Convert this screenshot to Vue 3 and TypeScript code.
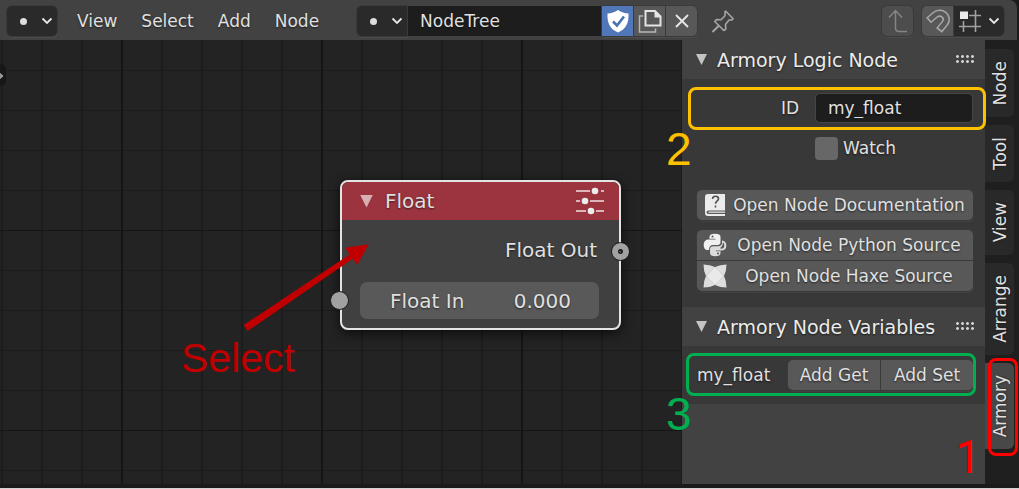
<script setup lang="ts">
import { ref } from 'vue'

const menus = ['View', 'Select', 'Add', 'Node']
const tabs = ['Node', 'Tool', 'View', 'Arrange', 'Armory']
const activeTab = ref('Armory')
const treeName = ref('NodeTree')
const nodeId = ref('my_float')
const watched = ref(false)
const floatIn = ref('0.000')
</script>

<template>
  <div class="editor">
    <header class="bar">
      <button class="btn dark picker" aria-label="Editor type">
        <i class="dot"></i>
        <svg class="chev" viewBox="0 0 12 8"><path d="M1.5 1.5 6 6l4.500-4.500" /></svg>
      </button>
      <nav class="menus">
        <button v-for="m in menus" :key="m" class="menu">{{ m }}</button>
      </nav>
      <div class="group tree">
        <button class="btn dark picker" aria-label="Browse node trees">
          <i class="dot"></i>
          <svg class="chev" viewBox="0 0 12 8"><path d="M1.5 1.5 6 6l4.500-4.500" /></svg>
        </button>
        <input v-model="treeName" class="tree-name" aria-label="Node tree name" />
        <button class="btn square blue" aria-label="Fake user">
          <svg viewBox="0 0 30 30">
            <path d="M15 4c3 2.500 7 3.200 10.500 3.500C26 17 23 23 15 26.500 7 23 4 17 4.500 7.500 8 7.200 12 6.500 15 4z" fill="#fff" />
            <path d="m10 15.500 4 4 7-9" fill="none" stroke="#4772b3" stroke-width="2.600" />
          </svg>
        </button>
        <button class="btn square" aria-label="Duplicate">
          <svg viewBox="0 0 30 30" fill="none" stroke="#e4e4e4" stroke-width="1.500">
            <path d="M10.500 5H20l5.500 5.500v9h-15z" stroke-width="2" />
            <path d="M19.500 4.500v7h7z" fill="#e4e4e4" stroke="none" />
            <path d="M8 10H4.500v16h16v-3.500" stroke="#b5b5b5" />
          </svg>
        </button>
        <button class="btn square" aria-label="Unlink">
          <svg viewBox="0 0 30 30"><path d="m9 9 12 12M21 9 9 21" stroke="#e8e8e8" stroke-width="1.800" /></svg>
        </button>
      </div>
      <button class="bare" aria-label="Pin">
        <svg viewBox="0 0 24 24" fill="none" stroke="#a6a6a6" stroke-width="1.600" stroke-linejoin="round">
          <path d="m14.500 2 7.500 7.500-1 1.500h-3l-3.500 4.500.3 4.500-2 1.500-9-9L5.500 10.500l4.500.3 4-4V3z" />
          <path d="M8 16.500 1.500 23" stroke-width="2" />
        </svg>
      </button>
      <button class="btn faded up" aria-label="Go to parent node tree">
        <svg viewBox="0 0 30 30" fill="none" stroke="#858585" stroke-width="1.500">
          <path d="M12.500 4.500V22q0 3.500 3.500 3.500h8M6 11.500l6.500-7 6.500 7" />
        </svg>
      </button>
      <div class="group snap">
        <button class="btn square" aria-label="Snap">
          <svg viewBox="0 0 30 30" fill="none">
            <path d="M5.500 14.500 12 9C18 4 26.500 10.500 22 17l-6 7.500" stroke="#a8a8a8" stroke-width="7.500" />
            <path d="M6.700 13.500 12 9C18 4 26.500 10.500 22 17l-5 6.200" stroke="#595959" stroke-width="4.500" />
          </svg>
        </button>
        <button class="btn dark snap-to" aria-label="Snap element">
          <svg class="grid-icon" viewBox="0 0 24 24" fill="none" stroke="#a0a0a0" stroke-width="1.600">
            <path d="M17.500 1v22M5.500 12v11M11 6.500h12M1 17.500h22" />
            <path d="M2 2.500h8v7.500H2z" fill="#ececec" stroke="none" />
          </svg>
          <svg class="chev" viewBox="0 0 12 8"><path d="M1.5 1.5 6 6l4.500-4.500" /></svg>
        </button>
      </div>
    </header>

    <div class="work">
      <main class="canvas">
        <button class="expander" aria-label="Show toolbar"></button>
        <section class="node">
          <header class="node-head">
            <i class="tri"></i>
            <span>Float</span>
            <svg class="sliders" viewBox="0 0 30 28" fill="none" stroke="#dcb4b8" stroke-width="1.800">
              <path d="M1 4h14M26 4h3M1 14h4M15 14h14M1 24h10M21 24h8" />
              <g fill="#ececec" stroke="none">
                <circle cx="20" cy="4" r="3.300" /><circle cx="10" cy="14" r="3.300" /><circle cx="16" cy="24" r="3.300" />
              </g>
            </svg>
          </header>
          <div class="output">Float Out<i class="socket out"></i></div>
          <div class="input-row">
            <i class="socket in"></i>
            <label class="number">
              <span>Float In</span>
              <input v-model="floatIn" inputmode="decimal" />
            </label>
          </div>
        </section>
        <svg class="arrow" viewBox="0 0 126 88" fill="#c00000">
          <path d="M.7 81 106.500 10.500 102 3.700 125.700.3 114.300 20.700 109.800 14.800 4.700 87z" />
        </svg>
        <span class="note select-note">Select</span>
      </main>

      <aside class="sidebar">
        <h2 class="panel-head"><i class="tri"></i>Armory Logic Node<i class="grip"></i></h2>
        <div class="panel props">
          <div class="id-row">
            <label for="node-id">ID</label>
            <input id="node-id" v-model="nodeId" />
            <i class="frame yellow"></i>
            <span class="note two">2</span>
          </div>
          <label class="watch"><input v-model="watched" type="checkbox" />Watch</label>
          <button class="btn wide doc">
            <svg viewBox="0 0 24 24">
              <path d="M5 1h17v16.500H5.500q-2 0-2 1.700t2 1.700H22V23H5q-3 0-3-3V4q0-3 3-3z" fill="#ececec" />
              <path d="M5.500 19.200H22" stroke="#d8d8d8" stroke-width="1.400" />
              <path d="M9.500 5.800q.4-2.600 3-2.600 3 0 3 2.500c0 2.400-3 2.400-3 5M12.500 12.500v1.900" fill="none" stroke="#505050" stroke-width="1.600" />
            </svg>
            <span>Open Node Documentation</span>
          </button>
          <div class="stack">
            <button class="btn wide">
              <svg viewBox="0 0 24 24">
                <path d="M19 7.500q4.300.5 4.300 5t-4.300 5h-6v.8h4.500V20q0 3.200-5.200 3.200T7 20v-3.500q0-3.200 3.500-3.200h4.500Q19 13.300 19 9.500z" fill="#dcdcdc" />
                <path d="M17.500 15.800q3.800.2 3.800-3.300 0-2.500-1.300-3.200-.3 4.500-2.500 5.200z" fill="#585858" />
                <path d="M6.500 6.500V4Q6.500.8 12 .8T17.500 4v5q0 3-3 3H10q-3.800 0-4 5H4.500Q.7 17 .7 12t4.300-5.500h7.500v-.7H6.500z" fill="#f0f0f0" />
                <circle cx="9.500" cy="3.600" r="1" fill="#555" /><circle cx="15" cy="20.600" r="1" fill="#555" />
              </svg>
              <span>Open Node Python Source</span>
            </button>
            <button class="btn wide">
              <svg viewBox="0 0 24 24">
                <path d="M.5.5Q7 .5 12 3 17 .5 23.500.5q0 6.500-2.500 11.500 2.500 5 2.500 11.500-6.500 0-11.500-2.500-5 2.500-11.500 2.500Q.5 17 3 12 .5 7 .5.5z" fill="#dedede" />
                <path d="M12 3 21 12 12 21 3 12z" fill="#e9e9e9" stroke="#c8c8c8" stroke-width=".7" />
              </svg>
              <span>Open Node Haxe Source</span>
            </button>
          </div>
        </div>
        <h2 class="panel-head"><i class="tri"></i>Armory Node Variables<i class="grip"></i></h2>
        <div class="panel vars">
          <span class="var-name">my_float</span>
          <div class="group pair">
            <button class="btn">Add Get</button>
            <button class="btn">Add Set</button>
          </div>
          <i class="frame green"></i>
          <span class="note three">3</span>
        </div>
        <span class="note one">1</span>
      </aside>

      <nav class="tabs">
        <button v-for="t in tabs" :key="t" class="tab" :class="{ active: t === activeTab }" @click="activeTab = t">
          <span>{{ t }}</span>
          <i v-if="t === 'Armory'" class="frame red"></i>
        </button>
      </nav>
    </div>
  </div>
</template>

<style>
body {
  margin: 0;
  background: #1b1b1b;
}
</style>

<style scoped>
* {
  box-sizing: border-box;
}
.editor {
  display: flex;
  flex-direction: column;
  min-height: 100vh;
  overflow: hidden;
  background: #1b1b1b;
  border-bottom: 1px solid #d4d4d4;
  color: #e0e0e0;
  font: 17px/20px "DejaVu Sans", sans-serif;
  text-shadow: 0 1px 2px rgba(0, 0, 0, 0.6);
}
button,
input {
  margin: 0;
  padding: 0;
  border: 0;
  background: none;
  color: inherit;
  font: inherit;
  text-shadow: inherit;
}
input {
  min-width: 0;
  outline: 0;
}
svg {
  display: block;
  flex: none;
}
.bar {
  display: flex;
  align-items: center;
  height: 40px;
  margin-right: 2px;
  padding: 2px 13px 0 7px;
  background: #424242;
  border-radius: 0 8px 0 0;
}
.btn {
  display: flex;
  align-items: center;
  justify-content: center;
  height: 30px;
  background: #585858;
  border-radius: 5px;
  box-shadow: 0 0 0 1px #3a3a3a, 1px 2px 1px rgba(255, 255, 255, 0.06);
}
.btn.dark {
  background: #2a2a2a;
}
.btn.blue {
  background: #5078b8;
}
.btn.faded {
  background: #4d4d4d;
}
.picker {
  gap: 14px;
  width: 50px;
  padding-left: 8px;
}
.dot {
  width: 7px;
  height: 7px;
  border-radius: 50%;
  background: #dedede;
}
.chev {
  width: 12px;
  height: 8px;
  fill: none;
  stroke: #e6e6e6;
  stroke-width: 1.8;
}
.menus {
  display: flex;
  margin: 0 26px 0 8px;
}
.menu {
  padding: 0 12px;
  height: 30px;
}
.group {
  display: flex;
  gap: 1px;
}
.group > * {
  border-radius: 0;
}
.group > :first-child {
  border-radius: 5px 0 0 5px;
}
.group > :last-child {
  border-radius: 0 5px 5px 0;
}
.square {
  width: 31px;
}
.square svg,
.up svg {
  width: 30px;
  height: 30px;
}
.tree-name {
  width: 193px;
  height: 30px;
  padding: 0 12px;
  background: #1d1d1d;
}
.bare {
  margin-left: 14px;
}
.bare svg {
  width: 24px;
  height: 24px;
}
.up {
  width: 31px;
  margin-left: auto;
}
.snap {
  margin-left: 9px;
}
.snap-to {
  gap: 6px;
  width: 50px;
}
.grid-icon {
  width: 24px;
  height: 24px;
}
.work {
  display: flex;
  flex: 1;
  margin-bottom: 4px;
}
.canvas {
  position: relative;
  flex: 1;
  min-width: 0;
  background-color: #232323;
  background-image:
    linear-gradient(90deg, #151515 2px, transparent 2px),
    linear-gradient(#151515 1px, transparent 1px),
    linear-gradient(90deg, #1c1c1c 2px, transparent 2px),
    linear-gradient(#1b1b1b 1px, transparent 1px);
  background-size: 200px 100%, 100% 200px, 40px 100%, 100% 40px;
  background-position: 121px 0, 0 190px, 1px 0, 0 30px;
}
.expander {
  position: absolute;
  top: 24px;
  left: -6px;
  width: 12px;
  height: 22px;
  border-radius: 5px;
  background: #171717;
}
.expander::after {
  content: "";
  position: absolute;
  top: 9px;
  right: 4px;
  width: 4px;
  height: 4px;
  border: solid #a0a0a0;
  border-width: 2px 2px 0 0;
  transform: rotate(45deg);
}
.node {
  position: absolute;
  left: 340px;
  top: 140px;
  width: 281px;
  height: 150px;
  border: 2px solid #e4e4e4;
  border-radius: 8px;
  background: rgba(66, 66, 66, 0.94);
  box-shadow: 0 3px 12px rgba(0, 0, 0, 0.7);
  font-size: 20px;
  line-height: 24px;
}
.node-head {
  display: flex;
  align-items: center;
  height: 38px;
  padding: 0 14px 0 18px;
  border-radius: 6px 6px 0 0;
  background: #9c343f;
}
.tri {
  width: 13px;
  height: 13px;
  background: #c4c4c4;
  clip-path: polygon(0 0, 100% 0, 50% 100%);
}
.node-head .tri {
  margin-right: 12px;
  background: #d8b0b4;
}
.sliders {
  width: 30px;
  height: 28px;
  margin-left: auto;
}
.output {
  position: relative;
  padding: 18px 22px 0 0;
  text-align: right;
}
.socket {
  position: absolute;
  width: 19px;
  height: 19px;
  border: 1px solid #1c1c1c;
  border-radius: 50%;
  background: #a1a1a1;
}
.socket.out {
  top: 22px;
  right: -11px;
  background: radial-gradient(circle, #555 1px, #1c1c1c 1px, #1c1c1c 2px, #a1a1a1 3px);
}
.socket.in {
  left: -12px;
}
.input-row {
  position: relative;
  padding: 20px 20px 0 18px;
}
.input-row .socket {
  top: 29px;
}
.number {
  display: flex;
  align-items: center;
  justify-content: space-between;
  height: 37px;
  padding: 0 28px 0 30px;
  border-radius: 7px;
  background: #595959;
}
.number input {
  width: 80px;
  text-align: right;
}
.arrow {
  position: absolute;
  left: 243px;
  top: 204px;
  width: 126px;
  height: 88px;
}
.note {
  position: absolute;
  font-family: "Liberation Sans", Arial, sans-serif;
  font-size: 46px;
  line-height: 46px;
  text-shadow: none;
}
.select-note {
  left: 181px;
  top: 295px;
  color: #c00000;
  font-size: 41px;
}
.sidebar {
  position: relative;
  width: 303px;
  background: #424242;
}
.panel-head {
  display: flex;
  align-items: center;
  height: 39px;
  margin: 0;
  padding: 0 10px 0 14px;
  background: #424242;
  color: #ececec;
  font-size: 19px;
  font-weight: 400;
}
.panel-head .tri {
  width: 11px;
  height: 11px;
  margin-right: 10px;
}
.grip {
  width: 20px;
  height: 10px;
  margin: 0 0 2px auto;
  background: radial-gradient(circle, #d0d0d0 1px, #1c1c1c 2px, transparent 2px) 0 0 / 5px 5px;
}
.panel {
  background: #383838;
}
.props {
  height: 228px;
  padding: 14px 12px 0 15px;
}
.id-row {
  position: relative;
  display: flex;
  align-items: center;
}
.id-row label {
  flex: 1;
  padding-right: 16px;
  text-align: right;
}
.id-row input {
  width: 158px;
  height: 30px;
  padding: 0 12px;
  border: 1px solid #464646;
  border-radius: 5px;
  background: #1d1d1d;
}
.watch {
  display: flex;
  align-items: center;
  gap: 5px;
  margin: 14px 0 0 118px;
  height: 22px;
}
.watch input {
  appearance: none;
  width: 23px;
  height: 23px;
  border-radius: 4px;
  background: #676767;
}
.watch input:checked {
  background: #5078b8;
}
.wide {
  width: 100%;
  padding: 0 2px 0 6px;
}
.wide svg {
  width: 24px;
  height: 24px;
}
.wide span {
  flex: 1;
}
.doc {
  margin: 31px 0 10px;
}
.stack {
  display: flex;
  flex-direction: column;
  gap: 1px;
}
.stack .btn:first-child {
  border-radius: 5px 5px 0 0;
}
.stack .btn:last-child {
  border-radius: 0 0 5px 5px;
}
.vars {
  position: relative;
  display: flex;
  align-items: center;
  justify-content: space-between;
  height: 58px;
  padding: 0 12px 0 15px;
}
.pair .btn {
  width: 92px;
}
.frame {
  position: absolute;
  border: 3px solid;
  border-radius: 8px;
  pointer-events: none;
}
.yellow {
  z-index: 1;
  inset: -6px -13px -7px -9px;
  border-color: #ffc000;
}
.green {
  inset: 7px 9px 8px 4px;
  border-color: #00b050;
}
.red {
  inset: -5px -4px -7px 3px;
  border-color: #f00;
}
.two {
  left: -31px;
  top: 33px;
  color: #ffc000;
}
.three {
  left: -16px;
  top: 45px;
  color: #00b050;
}
.one {
  right: 4px;
  top: 394px;
  color: #f00;
  font-family: Roboto, Arial, sans-serif;
}
.tabs {
  display: flex;
  flex-direction: column;
  gap: 8px;
  width: 34px;
  padding: 9px 5px 0 0;
  background: #1f1f1f;
}
.tab {
  position: relative;
  display: flex;
  align-items: center;
  justify-content: center;
  padding: 12px 0;
  border-radius: 0 6px 6px 0;
  background: #292929;
}
.tab.active {
  background: #484848;
}
.tab span {
  writing-mode: vertical-rl;
  transform: rotate(180deg);
}
</style>
